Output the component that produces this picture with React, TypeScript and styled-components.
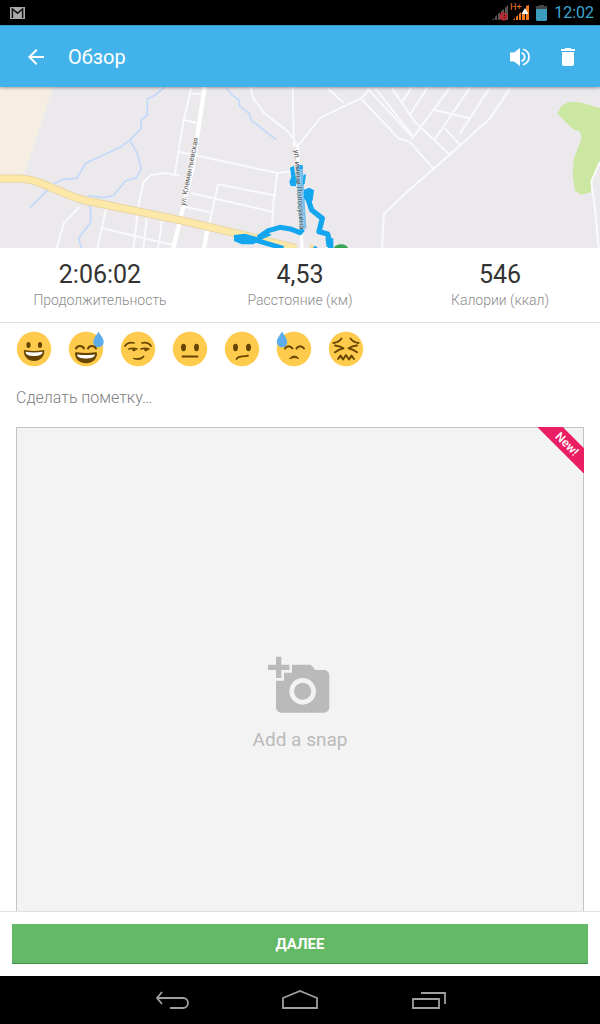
import React from 'react';
import styled, { createGlobalStyle } from 'styled-components';

const Global = createGlobalStyle`
  * { box-sizing: border-box; }
  body { margin: 0; background: #fff; font-family: Roboto, "Noto Sans", sans-serif; }
  button { font: inherit; color: inherit; background: none; border: 0; padding: 0; cursor: pointer; }
  svg { display: block; }
`;

const Screen = styled.div`
  display: flex;
  flex-direction: column;
  height: 100vh;
  background: #fff;
`;

const StatusBar = styled.div`
  display: flex;
  align-items: center;
  justify-content: space-between;
  flex: none;
  height: 25px;
  padding: 0 6px 0 10px;
  background: #000;
`;

const StatusGroup = styled.div<{ $gap: number }>`
  display: flex;
  align-items: center;
  gap: ${(p) => p.$gap}px;
`;

const Clock = styled.time`
  color: #3ba6cf;
  font-size: 16px;
  line-height: 24px;
`;

const AppBar = styled.header`
  position: relative;
  z-index: 1;
  display: flex;
  align-items: center;
  flex: none;
  gap: 20px;
  height: 62px;
  padding: 0 20px 0 24px;
  background: #42b2ea;
  color: #fff;
  border-top: 1px solid #3a9bcd;
  box-shadow: 0 1px 3px rgba(0, 0, 0, 0.35);
`;

const Title = styled.h1`
  flex: 1;
  margin: 0;
  font-size: 20px;
  font-weight: 400;
  line-height: 24px;
`;

const Actions = styled.div`
  display: flex;
  gap: 24px;
`;

const Content = styled.main`
  flex: 1;
  min-height: 0;
  overflow-y: auto;
  scrollbar-width: none;
`;

const MapView = styled.svg`
  width: 100%;
  height: 161px;
  background: #ebe9ec;
`;

const Stats = styled.dl`
  display: grid;
  grid-template-columns: repeat(3, 1fr);
  margin: 0;
  padding: 12px 0;
  border-bottom: 1px solid #e0e0e0;
  text-align: center;
`;

const Stat = styled.div`
  display: flex;
  flex-direction: column-reverse;
`;

const StatValue = styled.dd`
  margin: 0;
  color: #333;
  font-size: 25px;
  line-height: 30px;
`;

const StatLabel = styled.dt`
  color: #8c8c8c;
  font-size: 14px;
  font-weight: 300;
  line-height: 20px;
`;

const Moods = styled.div`
  display: flex;
  gap: 16px;
  padding: 8px 16px;
`;

const NoteInput = styled.input`
  display: block;
  width: 100%;
  height: 32px;
  margin: 6px 0 14px;
  padding: 0 16px;
  border: 0;
  outline: 0;
  background: none;
  color: #333;
  font: 300 16px/24px Roboto, "Noto Sans", sans-serif;
  &::placeholder { color: #808080; opacity: 1; }
`;

const SnapArea = styled.div`
  padding: 0 16px 16px;
`;

const SnapCard = styled.button`
  position: relative;
  display: flex;
  flex-direction: column;
  align-items: center;
  justify-content: center;
  gap: 8px;
  width: 100%;
  aspect-ratio: 1;
  padding-bottom: 14px;
  background: #f3f3f3;
  border: 1px solid #c4c4c4;
  color: #bababa;
  font-size: 19px;
  line-height: 28px;
`;

const RibbonCorner = styled.span`
  position: absolute;
  top: -1px;
  right: -1px;
  width: 46px;
  height: 46px;
  overflow: hidden;
`;

const Ribbon = styled.span`
  position: absolute;
  top: 8px;
  right: -28px;
  width: 90px;
  height: 18px;
  background: #ea1e63;
  color: #fff;
  font-size: 12px;
  font-weight: 500;
  line-height: 18px;
  text-align: center;
  transform: rotate(45deg);
`;

const Footer = styled.footer`
  flex: none;
  padding: 12px;
  background: #fff;
  border-top: 1px solid #e0e0e0;
`;

const NextButton = styled.button`
  display: block;
  width: 100%;
  height: 40px;
  border-radius: 1px;
  background: #64b966;
  box-shadow: inset 0 -1px #468c49;
  color: #fff;
  font-size: 15px;
  font-weight: 700;
  line-height: 40px;
`;

const NavBar = styled.nav`
  display: flex;
  align-items: center;
  justify-content: center;
  flex: none;
  gap: 92px;
  height: 48px;
  background: #000;
`;

const MailIcon = () => (
  <svg width="15" height="12" viewBox="0 0 15 12">
    <rect width="15" height="12" fill="#aaa" />
    <path d="M2.400 11V2l5.100 4.200L12.600 2v9" fill="none" stroke="#111" strokeWidth="1.500" />
  </svg>
);

const signalBars = 'M0 15l2-2v2zM3 12l2-2v5H3zM6 9l2-2v8H6zM9 6l3-2v11H9zM13 3l3-3v15h-3z';

const SignalOff = () => (
  <svg width="16" height="16" viewBox="0 0 16 16">
    <path d={signalBars} fill="#555" />
    <circle cx="11.500" cy="11.500" r="3" fill="none" stroke="#c1272d" strokeWidth="1.800" />
    <path d="M9 11.500h5" stroke="#c1272d" strokeWidth="1.800" />
  </svg>
);

const SignalOn = () => (
  <svg width="19" height="16" viewBox="0 0 19 16" overflow="visible">
    <g transform="translate(3 0)">
      <path d="M0 15l2-2v2zM3 12l2-2v5H3zM6 9l2-2v8H6zM9 8h3v7H9zM13 1l3-1v15h-3z" fill="#f47c20" />
      <path d="M8.500 9l3.500-6 3.500 6z" fill="#fff" />
    </g>
    <text x="0" y="5" fontSize="9" fontFamily="Roboto, sans-serif" fill="#f47c20">H+</text>
  </svg>
);

const Battery = () => (
  <svg width="11" height="16" viewBox="0 0 11 16">
    <path d="M3 0h5v1h3v3H0V1h3z" fill="#444" />
    <path d="M0 4h11v11l-1 1H1l-1-1z" fill="#3c9cbd" />
  </svg>
);

const BackArrow = () => (
  <svg width="24" height="24" viewBox="0 0 24 24" fill="#fff">
    <path d="M20 11H7.830l5.590-5.590L12 4l-8 8 8 8 1.410-1.410L7.830 13H20v-2z" />
  </svg>
);

const Volume = () => (
  <svg width="24" height="24" viewBox="0 0 24 24">
    <path d="M2 7.500h4L12 3v18l-6-4.500H2z" fill="#fff" />
    <path d="M13.500 7.700c4.200 1.300 4.200 7.300 0 8.600M15 4.300c8 2.400 8 13 0 15.400" fill="none" stroke="#fff" strokeWidth="1.700" />
  </svg>
);

const Trash = () => (
  <svg width="24" height="24" viewBox="0 0 24 24" fill="#fff">
    <path d="M6 19c0 1.100.9 2 2 2h8c1.100 0 2-.9 2-2V7H6v12zM19 4h-3.500l-1-1h-5l-1 1H5v2h14V4z" />
  </svg>
);

const AddPhoto = () => (
  <svg width="64" height="64" viewBox="0 0 24 24" fill="#bababa">
    <path d="M3 4V1h2v3h3v2H5v3H3V6H0V4h3zm3 6V7h3V4h7l1.830 2H21c1.100 0 2 .9 2 2v12c0 1.100-.9 2-2 2H5c-1.100 0-2-.9-2-2V10h3zm7 9c2.760 0 5-2.240 5-5s-2.240-5-5-5-5 2.240-5 5 2.240 5 5 5zm-3.200-5c0 1.770 1.430 3.200 3.200 3.200s3.200-1.430 3.200-3.200-1.430-3.200-3.200-3.200-3.200 1.430-3.200 3.200z" />
  </svg>
);

const NavIcon = ({ d }: { d: string }) => (
  <svg width="36" height="20" viewBox="0 0 36 20" fill="none" stroke="#a0a0a0" strokeWidth="1.800">
    <path d={d} />
  </svg>
);

const brown = '#664500';
const line = { fill: 'none', stroke: brown, strokeWidth: 1.7, strokeLinecap: 'round' as const, strokeLinejoin: 'round' as const };

const Eyes = () => (
  <g fill={brown}>
    <ellipse cx="11.500" cy="16.500" rx="2.500" ry="3.700" />
    <ellipse cx="24.500" cy="16.500" rx="2.500" ry="3.700" />
  </g>
);

const moods: { name: string; face: React.ReactNode }[] = [
  {
    name: 'Отлично',
    face: (
      <>
        <ellipse cx="12.500" cy="14" rx="2.100" ry="3" fill={brown} />
        <ellipse cx="24" cy="14" rx="2.100" ry="3" fill={brown} />
        <path d="M7.800 20c0-1 1-1 2-.8 5.500 1 11 1 16.500 0 1-.2 2-.2 2 .8 0 5.500-4 10-10.250 10S7.800 25.500 7.800 20z" fill={brown} />
        <path d="M9.500 20.800c5.700 1 11.400 1 17.100 0 0 3-3.600 4.200-8.550 4.200s-8.550-1.200-8.550-4.200z" fill="#fff" />
      </>
    ),
  },
  {
    name: 'Хорошо',
    face: (
      <>
        <path d="M8 17.500c1.500-3.500 6.500-3.500 8 0M20 17.500c1.500-3.500 6.500-3.500 8 0" {...line} strokeWidth={2} />
        <path d="M7 22.500c0-1.300 1-1.500 2-1.200 6 1 12 1 18 0 1-.3 2-.1 2 1.200 0 5.500-4.500 9.700-11 9.700S7 28 7 22.500z" fill={brown} />
        <path d="M9 23.500c6 .8 12 .8 18 0 0 2.800-4 4-9 4s-9-1.200-9-4z" fill="#fff" />
        <path d="M30.500.5c-1.600 3.200-5.200 6.700-5.200 10.500a5.200 5.200 0 0 0 10.400 0C35.700 7.200 32.100 3.700 30.500.5z" fill="#5dadec" />
      </>
    ),
  },
  {
    name: 'Неплохо',
    face: (
      <>
        <path d="M5 15c2-3 5-4 9-3M22 12c4-1 7 0 9 3" {...line} />
        <path d="M9 18c2.500-1 5-1 8 0M21 18c2.500-1 5-1 8 0" {...line} />
        <path d="M12 18c0 3 4 3 4 .3zM24 18c0 3 4 3 4 .3z" fill={brown} />
        <path d="M13.500 27.500c4 .5 8 0 10.500-2.700-.3 3.500-6.500 4.700-10.500 2.700z" {...line} fill={brown} strokeWidth={1} />
      </>
    ),
  },
  {
    name: 'Нормально',
    face: (<><Eyes /><path d="M10.500 25.500h15" {...line} strokeWidth={2} /></>),
  },
  {
    name: 'Так себе',
    face: (<><Eyes /><path d="M12.500 28c2.500-4 6.500-1.700 11.500-3.400" {...line} strokeWidth={1.8} /></>),
  },
  {
    name: 'Плохо',
    face: (
      <>
        <path d="M9 17.500c1.500-3 5.500-3 7.500 0M20.500 17.500c1.500-3 5.500-3 7.500 0" {...line} strokeWidth={2} />
        <path d="M14 27.500c2-3.200 6.500-3.200 8.500 0-2.500-1.200-6-1.200-8.500 0z" {...line} fill={brown} strokeWidth={1} />
        <path d="M6 .5C4.400 3.700.8 7.200.8 11a5.200 5.200 0 0 0 10.400 0C11.200 7.200 7.600 3.700 6 .5z" fill="#5dadec" />
      </>
    ),
  },
  {
    name: 'Ужасно',
    face: (
      <>
        <path d="M5.500 12c3-.3 6-1.800 8-4.500M30.500 12c-3-.3-6-1.800-8-4.500" {...line} strokeWidth={1.9} />
        <path d="M7 14.500c3 .2 6 1.200 8.500 2.800-3 .7-6 2-8.500 4M29 14.500c-3 .2-6 1.200-8.500 2.800 3 .7 6 2 8.500 4" {...line} strokeWidth={1.900} />
        <path d="M10 28l2.500-3.500 2.500 4 3-4.500 3 4.500 2.500-4L26 28" {...line} strokeWidth={1.900} />
      </>
    ),
  },
];

const stats = [
  { label: 'Продолжительность', value: '2:06:02' },
  { label: 'Расстояние (км)', value: '4,53' },
  { label: 'Калории (ккал)', value: '546' },
];

const RouteMap = () => (
  <MapView viewBox="0 6 1800 483" preserveAspectRatio="xMidYMid slice" role="img" aria-label="Карта">
    <path d="M0 0H161L115 140 72 268H0z" fill="#f7eee3" />
    <path d="M1672 85L1684 64 1705 51 1740 52 1800 70V235L1775 290 1772 322 1745 329 1725 318 1718 270 1722 220 1745 160 1740 140 1720 133 1690 104z" fill="#cbe7a1" />
    <g fill="none" stroke="#c3d9fb" strokeWidth="5" strokeLinejoin="round">
      <path d="M494 6l-28 24-24 12 0 48-18 14-2 28-34 34-26 20-104 48-28 46-46 4-24 14-70 70" />
      <path d="M390 166l22 40 12 44-14 28-34 10-36 44-32 6-42-6" />
      <path d="M262 350l10 20 0 42-36 48 8 30" />
      <path d="M680 8l14 20 24 18 0 16 30 24 6 20 74 58" />
    </g>
    <g fill="none" stroke="#faf9fb" strokeWidth="6" strokeLinejoin="round">
      <path d="M574 10l-24 100-26 160M576 26h32M552 104l38 10M536 200l296 64 48-6" />
      <path d="M400 490l16-130 14-68 22-22 44-6 44 8" />
      <path d="M238 366l-46 48-22 76M318 372l-26 118M308 430l210 50M440 400l-10 90M486 408l-12 82" />
      <path d="M832 264l-12 90-4 76M654 298l-22 100-8 44M654 298l174 34M572 324l244 56M550 364l80 18" />
      <path d="M752 6l6 30 34 48 68 52 22 26 10 26M878 6l4 180" />
      <path d="M892 184l70-86 124-60 20-22M982 10l50 44M1080 38l116 122 34 12 70 78M1102 10l136 146" />
      <path d="M1126 10l112 142M1176 10l68 100 104 98M1234 8l-30 46M1282 8l-52 80M1350 8l-116 156M1300 74l106 26M1410 8l-106 156M1468 10l-88 136M1334 130l46 50M1530 10l-60 90-88 80-162 142-68 64-6 104" />
      <path d="M1800 230l-26 60 12 90 10 110" />
    </g>
    <path d="M614 6l-36 240-58 244M624 420l-12 70" fill="none" stroke="#fff" strokeWidth="13" />
    <path d="M892 180l14 310" fill="none" stroke="#fff" strokeWidth="9" />
    <path d="M0 281h58c64 0 124 48 200 66l280 58 180 42 170 43" fill="none" stroke="#ead5a6" strokeWidth="25" />
    <path d="M0 281h58c64 0 124 48 200 66l280 58 180 42 170 43" fill="none" stroke="#fde8a8" strokeWidth="19" />
    <path d="M930 482l20 10" stroke="#f5dda0" strokeWidth="12" />
    <path d="M898 245L909 432" stroke="#76c0ea" strokeWidth="20" />
    <g fill="none" stroke="#14a6ef" strokeWidth="15" strokeLinejoin="round">
      <path d="M775 458L805 437 840 427 875 433 900 443 909 432M750 460L850 490" />
      <path d="M925 345L935 375 967 400 957 440 983 447 993 490" strokeWidth="16" />
    </g>
    <path d="M702 450L735 446 770 456 800 440 815 450 780 466 760 478 725 478 702 468zM870 248L882 242 886 270 892 286 888 304 872 303 868 290 874 275zM892 240h16v12h-16zM910 270L918 268 914 296 908 300zM912 314L928 308 942 316 938 346 926 360 912 340zM976 460h24v26h-20zM938 488l8-6 8 8z" fill="#14a6ef" />
    <ellipse cx="1023" cy="493" rx="22" ry="15" fill="#36a653" />
    <g fontFamily="Roboto, sans-serif" fontSize="22" fill="#555" stroke="#fff" strokeWidth="3" strokeOpacity="0.400" paintOrder="stroke">
      <text transform="translate(555 363) rotate(-79)">ул. Клементьевская</text>
      <text fontSize="23" transform="translate(882 195) rotate(86)">ул. имени Полосухина</text>
    </g>
  </MapView>
);

export default function App() {
  return (
    <>
      <Global />
      <Screen>
        <StatusBar>
          <MailIcon />
          <StatusGroup $gap={7}>
            <StatusGroup $gap={2}>
              <SignalOff />
              <SignalOn />
            </StatusGroup>
            <Battery />
            <Clock>12:02</Clock>
          </StatusGroup>
        </StatusBar>
        <AppBar>
          <button aria-label="Назад"><BackArrow /></button>
          <Title>Обзор</Title>
          <Actions>
            <button aria-label="Звук"><Volume /></button>
            <button aria-label="Удалить"><Trash /></button>
          </Actions>
        </AppBar>
        <Content>
          <RouteMap />
          <Stats>
            {stats.map((s) => (
              <Stat key={s.label}>
                <StatLabel>{s.label}</StatLabel>
                <StatValue>{s.value}</StatValue>
              </Stat>
            ))}
          </Stats>
          <Moods>
            {moods.map((m) => (
              <button key={m.name} aria-label={m.name}>
                <svg width="36" height="36" viewBox="0 0 36 36">
                  <circle cx="18" cy="18" r="17.200" fill="#ffcb4c" />
                  {m.face}
                </svg>
              </button>
            ))}
          </Moods>
          <NoteInput aria-label="Сделать пометку" placeholder="Сделать пометку…" />
          <SnapArea>
            <SnapCard>
              <AddPhoto />
              <span>Add a snap</span>
              <RibbonCorner><Ribbon>New!</Ribbon></RibbonCorner>
            </SnapCard>
          </SnapArea>
        </Content>
        <Footer>
          <NextButton>ДАЛЕЕ</NextButton>
        </Footer>
        <NavBar>
          <button aria-label="Системная кнопка «Назад»"><NavIcon d="M8 2L3 8l5 6M3 8h26a5 5 0 0 1 0 10H16" /></button>
          <button aria-label="Домой"><NavIcon d="M1 18V8L18 1l17 7v10z" /></button>
          <button aria-label="Недавние приложения"><NavIcon d="M3 9h26v9H3zM11 3h24v11" /></button>
        </NavBar>
      </Screen>
    </>
  );
}
